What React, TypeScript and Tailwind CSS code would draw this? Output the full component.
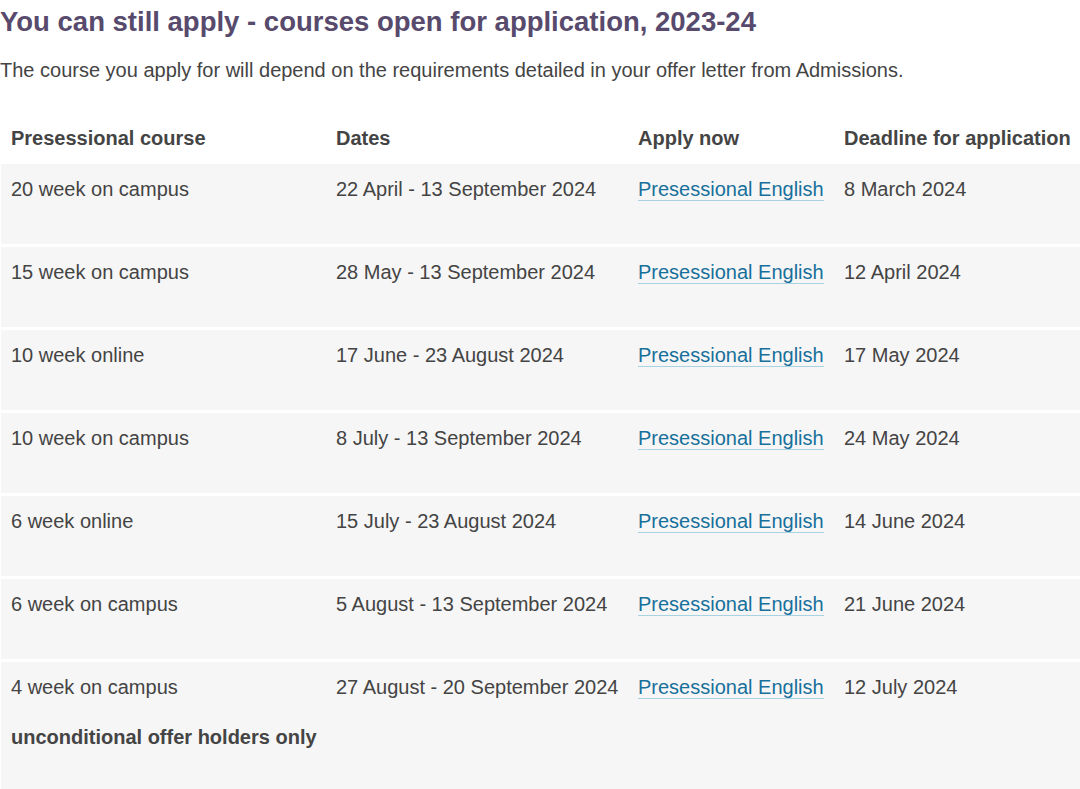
const rows = [
  { course: '20 week on campus', dates: '22 April - 13 September 2024', deadline: '8 March 2024' },
  { course: '15 week on campus', dates: '28 May - 13 September 2024', deadline: '12 April 2024' },
  { course: '10 week online', dates: '17 June - 23 August 2024', deadline: '17 May 2024' },
  { course: '10 week on campus', dates: '8 July - 13 September 2024', deadline: '24 May 2024' },
  { course: '6 week online', dates: '15 July - 23 August 2024', deadline: '14 June 2024' },
  { course: '6 week on campus', dates: '5 August - 13 September 2024', deadline: '21 June 2024' },
  { course: '4 week on campus', dates: '27 August - 20 September 2024', deadline: '12 July 2024', note: 'unconditional offer holders only' },
];

const cols = 'grid grid-cols-[325px_302px_206px_1fr]';

export default function App() {
  return (
    <div className="min-h-screen bg-white text-[#444] font-['Liberation_Sans',Arial,sans-serif] overflow-hidden">
      <h1 className="mt-[6px] text-[27.5px] leading-8 font-bold text-[#574a6c] whitespace-nowrap">
        You can still apply - courses open for application, 2023-24
      </h1>
      <p className="mt-[18px] text-[20px] leading-7 whitespace-nowrap">
        The course you apply for will depend on the requirements detailed in your offer letter from Admissions.
      </p>

      <div className="mt-[28px] ml-px flex flex-col gap-[3px]">
        <div className={`${cols} text-[20px] leading-7 font-bold`}>
          <div className="px-[10px] pt-3 pb-[9px]">Presessional course</div>
          <div className="px-[10px] pt-3 pb-[9px]">Dates</div>
          <div className="px-[10px] pt-3 pb-[9px]">Apply now</div>
          <div className="px-[10px] pt-3 pb-[9px] whitespace-nowrap">Deadline for application</div>
        </div>

        {rows.map((r) => (
          <div key={r.course} className={`${cols} bg-[#f6f6f6] text-[20px] leading-7`}>
            <div className="px-[10px] pt-[11px] pb-[19px]">
              <p className="mb-[22px]">{r.course}</p>
              {r.note && <p className="mb-[22px] font-bold whitespace-nowrap">{r.note}</p>}
            </div>
            <div className="px-[10px] pt-[11px] pb-[19px]">
              <p className="mb-[22px] whitespace-nowrap">{r.dates}</p>
            </div>
            <div className="px-[10px] pt-[11px] pb-[19px]">
              <p className="mb-[22px]">
                <a href="#" className="text-[#17709b] border-b border-[#a9d2e3] whitespace-nowrap">
                  Presessional English
                </a>
              </p>
            </div>
            <div className="px-[10px] pt-[11px] pb-[19px]">
              <p className="mb-[22px]">{r.deadline}</p>
            </div>
          </div>
        ))}
      </div>
    </div>
  );
}
